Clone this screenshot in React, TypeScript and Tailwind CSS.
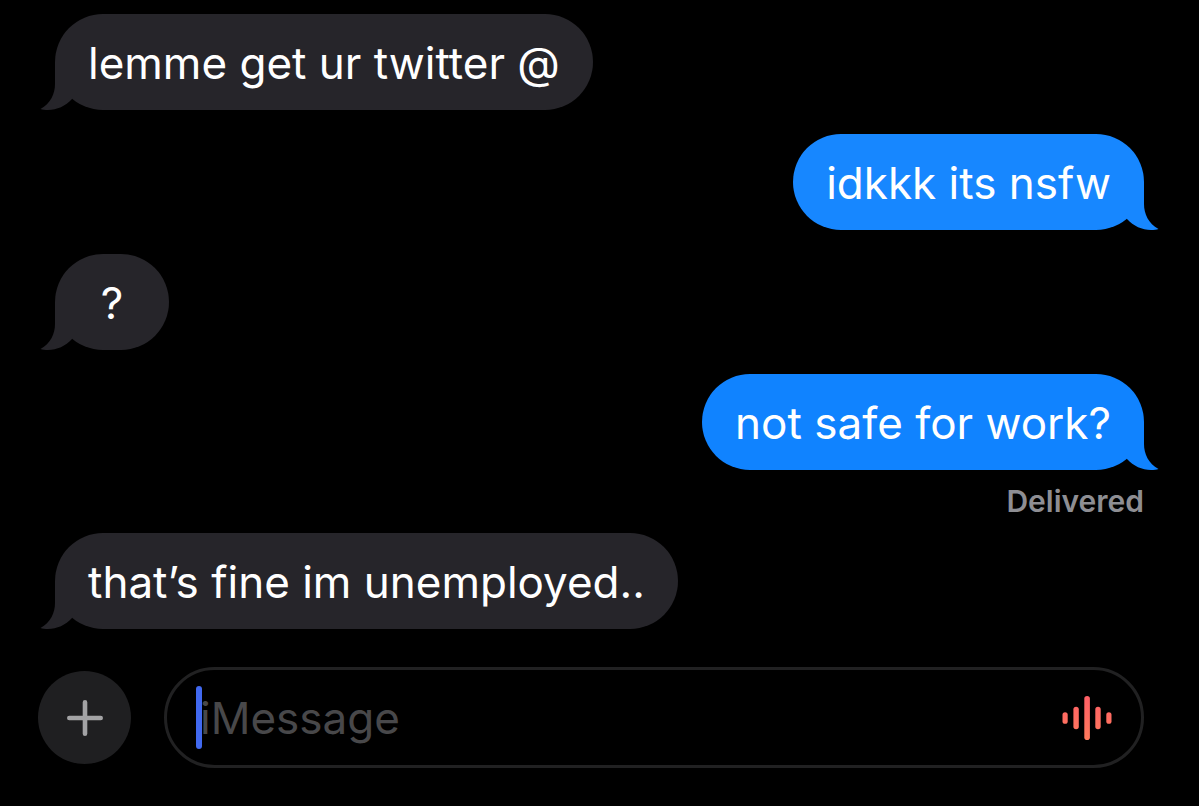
type Side = "in" | "out";

interface Message {
  side: Side;
  text: string;
  fill: string;
  tail: string;
  status?: string;
}

const messages: Message[] = [
  { side: "in", text: "lemme get ur twitter @", fill: "bg-[#26252a]", tail: "text-[#26252a]" },
  { side: "out", text: "idkkk its nsfw", fill: "bg-[#1787ff]", tail: "text-[#1787ff]" },
  { side: "in", text: "?", fill: "bg-[#26252a]", tail: "text-[#26252a]" },
  { side: "out", text: "not safe for work?", fill: "bg-[#1083ff]", tail: "text-[#1083ff]", status: "Delivered" },
  { side: "in", text: "that’s fine im unemployed..", fill: "bg-[#26252a]", tail: "text-[#26252a]" },
];

function Tail({ side, color }: { side: Side; color: string }) {
  const place = side === "in" ? "-left-[15px]" : "-right-[15px] -scale-x-100";
  return (
    <svg viewBox="0 0 32 52" aria-hidden="true" className={`absolute bottom-0 h-[52px] w-8 ${place} ${color}`}>
      <path d="M15 4V26C15 36 10.5 45.5 0.5 51C2.5 51.8 5 52 8 52C17 52 25.5 48 32 41V4Z" fill="currentColor" />
    </svg>
  );
}

function Bubble({ message }: { message: Message }) {
  const { side, text, fill, tail, status } = message;
  return (
    <li className={side === "in" ? "flex flex-col items-start" : "flex flex-col items-end"}>
      <p className={`relative min-w-[114px] rounded-[48px] px-[33px] pt-[21px] pb-[19px] text-center text-[44px] leading-[56px] text-white ${fill}`}>
        <Tail side={side} color={tail} />
        <span className="relative">{text}</span>
      </p>
      {status && <p className="-mb-[10px] mt-[13px] text-[30px] font-semibold leading-[36px] text-[#8e8e93]">{status}</p>}
    </li>
  );
}

function Composer() {
  return (
    <form className="mt-[38px] flex items-center gap-[33px] pl-[38px] pr-[55px]" onSubmit={(e) => e.preventDefault()}>
      <button type="button" aria-label="Add attachment" className="flex size-[93px] shrink-0 items-center justify-center rounded-full bg-[#1f1f21]">
        <svg viewBox="0 0 36 36" className="size-9" aria-hidden="true">
          <path d="M18 2.3V33.7M2.3 18H33.7" stroke="#a3a3a5" strokeWidth="4.6" strokeLinecap="round" />
        </svg>
      </button>
      <div className="relative flex h-[101px] min-w-0 flex-1 items-center rounded-full border-3 border-[#212122] pl-[33px] pr-[29px]">
        <span className="absolute left-[29px] h-[63px] w-[6px] rounded-full bg-[#4169f0]" />
        <input
          type="text"
          aria-label="iMessage"
          placeholder="iMessage"
          className="h-[60px] min-w-0 flex-1 bg-transparent text-[44px] text-white caret-[#4169f0] outline-none placeholder:text-[#48484a]"
        />
        <button type="button" aria-label="Record audio message" className="shrink-0">
          <svg viewBox="0 0 50 44" className="h-11 w-[50px]" aria-hidden="true">
            <defs>
              <linearGradient id="wave" x1="0" y1="0" x2="0" y2="44" gradientUnits="userSpaceOnUse">
                <stop offset="0" stopColor="#ff5f66" />
                <stop offset="1" stopColor="#ff7a5c" />
              </linearGradient>
            </defs>
            <g fill="url(#wave)">
              <rect x="0.5" y="16.2" width="5.2" height="11.6" rx="2.6" />
              <rect x="11.4" y="10.8" width="5.4" height="22.4" rx="2.7" />
              <rect x="22.3" y="0" width="5.6" height="44" rx="2.8" />
              <rect x="33.3" y="10.8" width="5.4" height="22.4" rx="2.7" />
              <rect x="44.3" y="16.2" width="5.2" height="11.6" rx="2.6" />
            </g>
          </svg>
        </button>
      </div>
    </form>
  );
}

export default function App() {
  return (
    <main className="flex min-h-screen flex-col bg-black pt-[14px] font-['Inter','Liberation_Sans',sans-serif]">
      <ul className="flex flex-col gap-6 px-[55px]">
        {messages.map((m) => (
          <Bubble key={m.text} message={m} />
        ))}
      </ul>
      <Composer />
    </main>
  );
}
